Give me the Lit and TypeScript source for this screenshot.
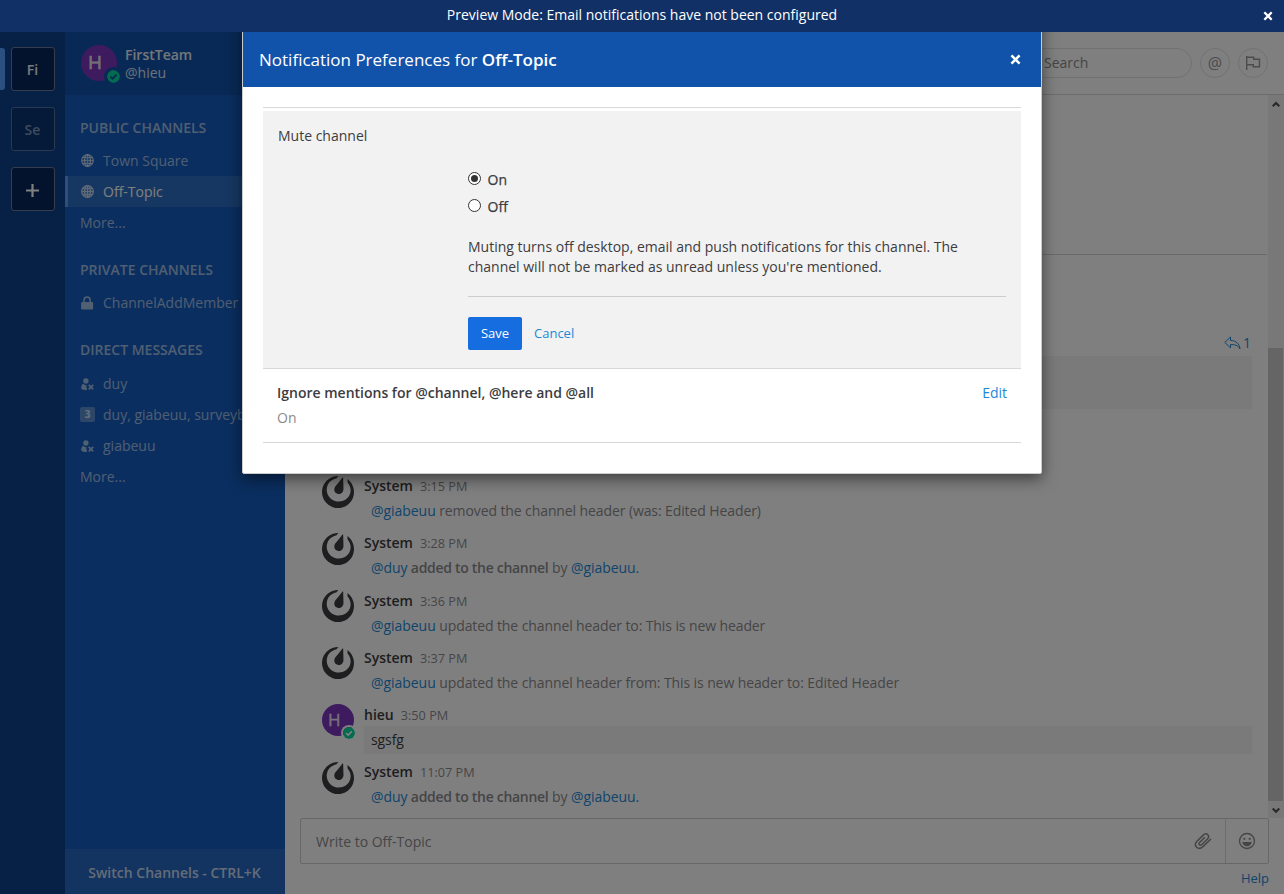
import { LitElement, html, css, svg, nothing } from "lit";
import { customElement, property } from "lit/decorators.js";
import { classMap } from "lit/directives/class-map.js";

const globe = html`<svg class="ico" width="14" height="14" viewBox="0 0 14 14" fill="none" stroke="currentColor" stroke-width="1.3">
  <circle cx="6.5" cy="6.5" r="5.8"/><ellipse cx="6.5" cy="6.5" rx="2.9" ry="5.8"/><path d="M6.5 .7v11.6M.7 6.500h11.600M1.500 3.500h10M1.500 9.500h10"/></svg>`;
const lock = html`<svg class="ico" width="14" height="14" viewBox="0 0 14 14"><path d="M3 6V4.300a3.100 3.300 0 0 1 6.200 0V6" fill="none" stroke="currentColor" stroke-width="1.500"/><rect x=".100" y="6" width="12" height="7.400" rx="1.200" fill="currentColor"/></svg>`;
const offline = html`<svg class="ico" width="14" height="14" viewBox="0 0 14 14"><circle cx="4.900" cy="3.900" r="2.700" fill="currentColor"/><path d="M2.500 6.700C.9 7.300.3 8.300.2 11.200c0 .9 2.600 1.900 5.400 1.900l.6-.8-1-2.300.8-1.600C4.600 8.300 3.200 7.800 2.500 6.700z" fill="currentColor"/><path d="M7.700 7.900l4.500 4.500M12.200 7.900l-4.500 4.500" stroke="currentColor" stroke-width="1.700"/></svg>`;
const cross = (s: number) => html`<svg width=${s} height=${s} viewBox="0 0 10 10"><path d="M1.300 1.300l7.400 7.400M8.700 1.300 1.300 8.700" stroke="#fff" stroke-width="2.300"/></svg>`;
const badge = (s: number, tick: string) => svg`<svg class="badge" width=${s} height=${s} viewBox="0 0 13 13"><circle cx="6.500" cy="6.500" r="6.500" fill="#06d6a0"/><path d="M3.400 6.600l2.200 2.100 4-4" fill="none" stroke=${tick} stroke-width="1.800"/></svg>`;

interface Part { text: string; kind?: "link" | "bold" }
interface Post { author: string; time: string; parts: Part[]; own?: boolean }

const posts: Post[] = [
  { author: "System", time: "3:15 PM", parts: [{ text: "@giabeuu", kind: "link" }, { text: " removed the channel header (was: Edited Header)" }] },
  { author: "System", time: "3:28 PM", parts: [{ text: "@duy", kind: "link" }, { text: " added to the channel", kind: "bold" }, { text: " by " }, { text: "@giabeuu.", kind: "link" }] },
  { author: "System", time: "3:36 PM", parts: [{ text: "@giabeuu", kind: "link" }, { text: " updated the channel header to: This is new header" }] },
  { author: "System", time: "3:37 PM", parts: [{ text: "@giabeuu", kind: "link" }, { text: " updated the channel header from: This is new header to: Edited Header" }] },
  { author: "hieu", time: "3:50 PM", own: true, parts: [{ text: "sgsfg" }] },
  { author: "System", time: "11:07 PM", parts: [{ text: "@duy", kind: "link" }, { text: " added to the channel", kind: "bold" }, { text: " by " }, { text: "@giabeuu.", kind: "link" }] },
];

const base = css`
  * { box-sizing: border-box; }
  svg { display: block; flex: none; }
`;

@customElement("mm-banner")
class Banner extends LitElement {
  static styles = [base, css`
    :host { display: flex; align-items: center; height: 32px; flex: none; background: #113066; color: #fff; font-size: 14px; z-index: 5; position: relative; padding-left: 21px; }
    .msg { flex: 1; text-align: center; line-height: 20px; padding-bottom: 2px; }
    .close { padding-right: 11px; }
  `];
  render() {
    return html`<span class="msg">Preview Mode: Email notifications have not been configured</span><span class="close">${cross(10)}</span>`;
  }
}

@customElement("mm-teams")
class Teams extends LitElement {
  static styles = [base, css`
    :host { display: flex; flex-direction: column; align-items: center; gap: 16px; width: 65px; flex: none; background: #0d428a; padding: 15px 0 0 1px; }
    .team { position: relative; width: 44px; height: 44px; border: 1px solid #6c7d99; border-radius: 3px; background: #08265b; color: #f4f6fa; font-weight: 600; font-size: 14px; display: flex; align-items: center; justify-content: center; padding-right: 1px; }
    .team.dim { background: #0a3270; color: #7d95bb; border-color: #55739f; }
    .plus { margin-top: 3px; }
    .pill { position: absolute; left: -12px; top: 0; width: 5px; height: 42px; background: #579eff; border-radius: 0 3px 3px 0; }
  `];
  render() {
    return html`
      <div class="team"><i class="pill"></i>Fi</div>
      <div class="team dim">Se</div>
      <div class="team"><svg class="plus" width="13" height="13" viewBox="0 0 13 13"><path d="M6.500 0v13M0 6.500h13" stroke="#fff" stroke-width="2.200"/></svg></div>`;
  }
}

@customElement("mm-sidebar")
class Sidebar extends LitElement {
  static styles = [base, css`
    :host { display: flex; flex-direction: column; width: 220px; flex: none; background: #145dbf; font-size: 14px; color: rgba(255,255,255,.6); }
    .head { display: flex; height: 63px; background: #1153ab; padding: 13px 0 0 16px; flex: none; }
    .avatar { position: relative; width: 36px; height: 36px; border-radius: 50%; background: #7c34bc; color: #e8e0f0; font: 400 19px/34px "Open Sans", sans-serif; -webkit-text-stroke: .6px currentColor; padding-left: 7px; margin-right: 8px; }
    .badge { position: absolute; left: 26px; top: 25px; border-radius: 50%; box-shadow: 0 0 0 3px #1153ab; }
    .who { line-height: 18px; padding-top: 1px; color: #d8e4f4; }
    .who b { display: block; font-weight: 600; color: #fff; opacity: .9; }
    .title { height: 49px; line-height: 34px; padding: 15px 0 0 15px; font-weight: 600; }
    .title.first { height: 50px; padding-top: 16px; }
    .title.last { height: 50px; }
    .row { display: flex; align-items: center; height: 31px; padding-left: 15px; line-height: 31px; white-space: nowrap; overflow: hidden; }
    .row .ico, .row .count { margin-right: 8px; flex: none; }
    .row .ico { margin-left: 1px; }
    .row.active { background: #2d6fc4; border-left: 3px solid #579eff; padding-left: 12px; color: #fff; }
    .active .ico { opacity: .7; }
    .count { width: 15px; height: 15px; border-radius: 2px; background: rgba(255,255,255,.3); color: rgba(255,255,255,.75); font: 700 10px/15px "Open Sans", sans-serif; text-align: center; }
    .switch { margin-top: auto; height: 45px; line-height: 48px; text-align: center; font-weight: 600; background: #2669c3; color: rgba(255,255,255,.75); font-size: 14px; padding-right: 1px; }
  `];
  row(icon: unknown, label: string, active = false) {
    return html`<div class=${classMap({ row: true, active })}>${icon}${label}</div>`;
  }
  render() {
    return html`
      <div class="head"><div class="avatar">H${badge(13, "#1153ab")}</div><div class="who"><b>FirstTeam</b>@hieu</div></div>
      <div class="title first">PUBLIC CHANNELS</div>
      ${this.row(globe, "Town Square")}${this.row(globe, "Off-Topic", true)}${this.row(nothing, "More...")}
      <div class="title">PRIVATE CHANNELS</div>
      ${this.row(lock, "ChannelAddMember")}
      <div class="title last">DIRECT MESSAGES</div>
      ${this.row(offline, "duy")}${this.row(html`<span class="count">3</span>`, "duy, giabeuu, surveybot")}${this.row(offline, "giabeuu")}${this.row(nothing, "More...")}
      <div class="switch">Switch Channels - CTRL+K</div>`;
  }
}

@customElement("mm-post")
class PostItem extends LitElement {
  @property({ attribute: false }) post!: Post;
  static styles = [base, css`
    :host { display: flex; height: 57.200px; flex: none; padding-left: 37px; font-size: 14px; color: #3d3c40; }
    .pic { position: relative; width: 32px; height: 32px; margin-right: 10px; flex: none; color: #3d3c40; }
    .user { border-radius: 50%; background: #7c34bc; color: #efe6f6; font: 400 17px/31px "Open Sans", sans-serif; -webkit-text-stroke: .3px currentColor; padding-left: 6px; }
    .badge { position: absolute; left: 21px; top: 22.500px; border-radius: 50%; box-shadow: 0 0 0 2px #fff; }
    .main { flex: 1; }
    .meta { height: 22px; line-height: 20px; padding-top: .6px; }
    .meta b { font-weight: 600; margin-right: 7px; }
    .meta span { font-size: 12.700px; opacity: .6; }
    .body { height: 28px; line-height: 20px; padding: 3.600px 7px 0; color: #8b8a8c; white-space: nowrap; letter-spacing: -.1px; }
    .body.own { background: #f4f4f4; color: #3d3c40; }
    .link { color: #2389d7; letter-spacing: -.05px; }
    .bold { font-weight: 600; letter-spacing: -.3px; }
  `];
  render() {
    const p = this.post;
    return html`
      ${p.own
        ? html`<div class="pic user">H${badge(12, "#fff")}</div>`
        : html`<div class="pic"><svg width="32" height="32" viewBox="0 0 24 24" fill="currentColor"><path d="M12.081 0C7.048-.034 2.339 3.125.637 8.153c-2.125 6.276 1.240 13.086 7.516 15.210 6.276 2.125 13.086-1.240 15.210-7.516 1.727-5.100-.172-10.552-4.311-13.557l.126 2.547c2.065 2.282 2.880 5.512 1.852 8.549-1.534 4.532-6.594 6.915-11.300 5.321-4.708-1.593-7.280-6.559-5.745-11.092 1.031-3.046 3.655-5.121 6.694-5.670l1.642-1.940A4.870 4.870 0 0 0 12.080 0zm3.528 1.094a.284.284 0 0 0-.236.096c-.145.142-.657.828-.657.828L13.600 3.400l-1.300 1.585-2.232 2.776s-1.024 1.278-.798 2.851c.226 1.574 1.396 2.340 2.304 2.648.907.307 2.302.408 3.438-.704 1.135-1.112 1.098-2.750 1.098-2.750l-.087-3.560-.070-2.050-.047-1.775s.010-.856-.020-1.057a.330.330 0 0 0-.277-.27z"/></svg></div>`}
      <div class="main">
        <div class="meta"><b>${p.author}</b><span>${p.time}</span></div>
        <div class=${classMap({ body: true, own: !!p.own })}>${p.parts.map(x => html`<span class=${x.kind ?? ""}>${x.text}</span>`)}</div>
      </div>`;
  }
}

@customElement("mm-center")
class Center extends LitElement {
  static styles = [base, css`
    :host { display: flex; flex-direction: column; flex: 1; min-width: 0; background: #fff; font-size: 14px; color: #3d3c40; }
    .head { display: flex; justify-content: flex-end; align-items: center; gap: 8px; height: 63px; flex: none; border-bottom: 1px solid #d8d8d8; padding-right: 16px; }
    .search { width: 240px; height: 30px; border: 1px solid #e2e2e2; border-radius: 15px; line-height: 28px; padding-left: 91px; color: #8b8a8c; }
    .round { width: 30px; height: 30px; border-radius: 50%; border: 1px solid #e2e2e2; display: flex; align-items: center; justify-content: center; color: #98979a; font-size: 16px; line-height: 26px; padding-bottom: 1px; }
    .list { display: flex; height: 723px; flex: none; }
    .posts { flex: 1; display: flex; flex-direction: column; }
    .gap { height: 160px; flex: none; border-bottom: 1px solid #d4d4d4; margin-right: 1px; }
    .older { height: 220.600px; flex: none; padding: 76px 16px 0 79px; }
    .reply { display: flex; justify-content: flex-end; align-items: center; gap: 2px; height: 25px; line-height: 20px; padding: 0 1px 2px 0; color: #2389d7; }
    .quote { height: 53px; background: #f4f4f4; }
    mm-post { margin-right: 16px; }
    .bar { width: 16px; background: #f0f0f0; display: flex; flex-direction: column; justify-content: space-between; align-items: center; color: #505050; }
    .arrow { height: 17px; padding: 6px 1px 0 0; }
    .grow { flex: 1; width: 100%; padding: 236px 1px 0 0; }
    .thumb { height: 453px; background: #cbcbcb; }
    .write { display: flex; align-items: center; margin: 0 15px; height: 46px; flex: none; border: 1px solid #cfcfcf; border-radius: 2px; padding-left: 15px; color: #8b8a8c; }
    .write span { flex: 1; }
    .clip { margin: 0 13px 1px 0; }
    .smile { height: 44px; width: 43px; border-left: 1px solid #d8d8d8; display: flex; align-items: center; justify-content: center; }
    .help { text-align: right; padding: 5px 15px 0; font-size: 13px; line-height: 18px; color: #2389d7; }
  `];
  render() {
    return html`
      <div class="head">
        <div class="search">Search</div>
        <div class="round">@</div>
        <div class="round"><svg width="16" height="16" viewBox="0 0 16 16" fill="none" stroke="currentColor" stroke-width="1.400"><path d="M1.700 1v14M1.700 2.200h7v2h5.800v7.600H8.300V9.800H1.700"/></svg></div>
      </div>
      <div class="list">
        <div class="posts">
          <div class="gap"></div>
          <div class="older">
            <div class="reply"><svg width="17" height="14" viewBox="0 0 17 14" fill="none" stroke="currentColor" stroke-width="1"><path d="M6.500 1 .8 6.400l5.700 5.400V8.600c4-.3 7.500.8 9.500 4.300-.5-5-4-8.300-9.500-8.500z"/></svg>1</div>
            <div class="quote"></div>
          </div>
          ${posts.map(p => html`<mm-post .post=${p}></mm-post>`)}
        </div>
        <div class="bar">
          <div class="arrow"><svg width="8" height="7" viewBox="0 0 8 7"><path d="M.7 5.300 4 2l3.300 3.300" fill="none" stroke="currentColor" stroke-width="2.100"/></svg></div>
          <div class="grow"><div class="thumb"></div></div>
          <div class="arrow"><svg width="8" height="7" viewBox="0 0 8 7"><path d="M.7 1.500 4 4.800l3.300-3.300" fill="none" stroke="currentColor" stroke-width="2.100"/></svg></div>
        </div>
      </div>
      <div class="write"><span>Write to Off-Topic</span>
        <svg class="clip" width="18" height="18" viewBox="0 0 18 18" fill="none" stroke="currentColor" stroke-width="1.500" stroke-linecap="round"><path d="M16.600 7.300 9 14.600c-2 1.800-4.600 2.200-6.400.6-1.700-1.700-1.500-4 .3-5.900l6.400-6.200c1.400-1.400 3.300-1.500 4.500-.4 1.200 1.200 1 2.900-.3 4.300L7.900 12.500c-.8.800-1.900.9-2.500.3s-.6-1.500.2-2.300l4.800-4.700"/></svg>
        <div class="smile"><svg width="18" height="18" viewBox="0 0 18 18"><circle cx="9" cy="9" r="7.500" fill="none" stroke="currentColor" stroke-width="1.300"/><circle cx="6.300" cy="6.800" r="1.100" fill="currentColor"/><circle cx="11.700" cy="6.800" r="1.100" fill="currentColor"/><path d="M4.300 10h9.400c-.3 2.600-2.200 4.200-4.700 4.200S4.600 12.600 4.300 10z" fill="currentColor"/></svg></div>
      </div>
      <div class="help">Help</div>`;
  }
}

@customElement("mm-dialog")
class Dialog extends LitElement {
  static styles = [base, css`
    :host { display: block; width: 800px; height: 472px; background: #fff; border: 1px solid #ccc; border-radius: 2px; box-shadow: 0 5px 15px rgba(0,0,0,.5); font-size: 14px; color: #3d3c40; }
    .head { display: flex; justify-content: space-between; align-items: center; height: 84px; padding: 29px 20px 0 16px; background: #1153ab; color: #fff; font-size: 17px; }
    .head b { font-weight: 600; }
    .content { margin: 20px 20px 0; border-top: 1px solid #d8d8d8; padding-top: 3px; }
    .section { background: #f2f2f2; height: 257px; padding: 15px 15px 0; }
    .name { line-height: 20px; }
    .form { padding: 20px 0 0 190px; }
    .opt { display: flex; align-items: center; height: 27px; font-weight: 400; -webkit-text-stroke: .25px currentColor; }
    .radio { width: 13px; height: 13px; border: 1px solid #333; border-radius: 50%; background: #fff; margin: -3px 6.500px 0 0; display: flex; align-items: center; justify-content: center; }
    .dot { width: 7px; height: 7px; border-radius: 50%; background: #333; }
    .hint { line-height: 20px; padding: 17px 0 19px; border-bottom: 1px solid #ccc; }
    .actions { display: flex; align-items: center; gap: 12px; padding-top: 20px; font-size: 13px; color: #2389d7; }
    .actions a { line-height: 18px; margin-bottom: 1px; }
    .save { width: 54px; height: 33px; line-height: 33px; text-align: center; border-radius: 2px; background: #166de0; color: #fff; }
    .item { border: solid #d8d8d8; border-width: 1px 0; height: 75px; padding: 14px 14px 0; line-height: 20px; }
    .line { display: flex; justify-content: space-between; }
    .line b { font-weight: 600; }
    .line a { color: #2389d7; }
    .value { color: #8b8a8c; padding-top: 5px; }
  `];
  render() {
    return html`
      <div class="head"><span>Notification Preferences for <b>Off-Topic</b></span>${cross(11)}</div>
      <div class="content">
        <div class="section">
          <div class="name">Mute channel</div>
          <div class="form">
            <div class="opt"><span class="radio"><i class="dot"></i></span>On</div>
            <div class="opt"><span class="radio"></span>Off</div>
            <div class="hint">Muting turns off desktop, email and push notifications for this channel. The channel will not be marked as unread unless you're mentioned.</div>
            <div class="actions"><span class="save">Save</span><a>Cancel</a></div>
          </div>
        </div>
        <div class="item">
          <div class="line"><b>Ignore mentions for @channel, @here and @all</b><a>Edit</a></div>
          <div class="value">On</div>
        </div>
      </div>`;
  }
}

@customElement("app-root")
class AppRoot extends LitElement {
  static styles = [base, css`
    :host { display: flex; flex-direction: column; width: 1284px; height: 894px; position: relative; overflow: hidden; font-family: "Open Sans", sans-serif; }
    .app { display: flex; flex: 1; min-height: 0; }
    .shade { position: absolute; inset: 0; background: rgba(0,0,0,.5); z-index: 2; padding-top: 2px; display: flex; justify-content: center; align-items: flex-start; }
  `];
  render() {
    return html`
      <mm-banner></mm-banner>
      <div class="app"><mm-teams></mm-teams><mm-sidebar></mm-sidebar><mm-center></mm-center></div>
      <div class="shade"><mm-dialog></mm-dialog></div>`;
  }
}
